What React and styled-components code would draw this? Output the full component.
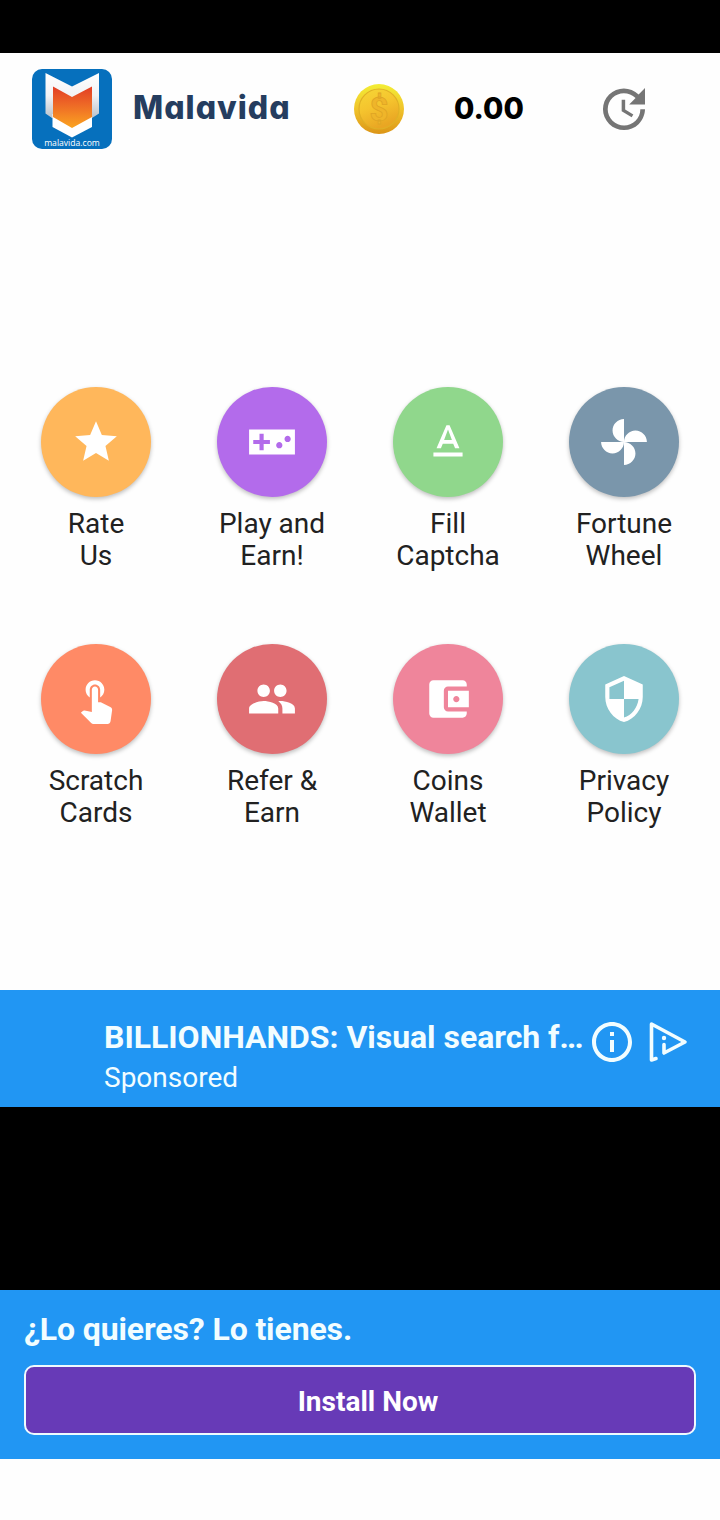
import React from "react";
import styled, { createGlobalStyle } from "styled-components";
import {
  MdAccountBalanceWallet,
  MdStar,
  MdTextFormat,
  MdInfoOutline,
} from "react-icons/md";

const theme = {
  blue: "#2196f3",
  purple: "#673ab7",
  navy: "#253d5f",
  text: "#212121",
  grey: "#757575",
};

const PATHS = {
  game: "M23 6H1v12h22V6zm-12 7H8v3H6v-3H3v-2h3V8h2v3h3v2zm4.5 2c-.83 0-1.5-.67-1.5-1.5s.67-1.5 1.5-1.5 1.5.67 1.5 1.5-.67 1.5-1.5 1.5zm4-3c-.83 0-1.5-.67-1.5-1.5S18.67 9 19.5 9s1.5.67 1.5 1.5-.67 1.5-1.5 1.5z",
  toys: "M12 12c0-3 2.5-5.5 5.5-5.5S23 9 23 12H12zm0 0c0 3-2.5 5.5-5.5 5.5S1 15 1 12h11zm0 0c-3 0-5.5-2.5-5.5-5.5S9 1 12 1v11zm0 0c3 0 5.5 2.5 5.5 5.5S15 23 12 23V12z",
  touch: "M9 11.24V7.5C9 6.12 10.12 5 11.5 5S14 6.12 14 7.5v3.74c1.21-.81 2-2.18 2-3.74C16 5.01 13.99 3 11.5 3S7 5.01 7 7.5c0 1.56.79 2.93 2 3.74zm9.84 4.63l-4.54-2.26c-.17-.07-.35-.11-.54-.11H13v-6c0-.83-.67-1.5-1.5-1.5S10 6.67 10 7.5v10.74l-3.43-.72c-.08-.01-.15-.03-.24-.03-.31 0-.59.13-.79.33l-.79.8 4.94 4.94c.27.27.65.44 1.06.44h6.79c.75 0 1.33-.55 1.44-1.28l.75-5.27c.01-.07.02-.14.02-.2 0-.62-.38-1.16-.91-1.38z",
  group: "M16 11c1.66 0 2.99-1.34 2.99-3S17.66 5 16 5c-1.66 0-3 1.34-3 3s1.34 3 3 3zm-8 0c1.66 0 2.99-1.34 2.99-3S9.66 5 8 5C6.34 5 5 6.34 5 8s1.34 3 3 3zm0 2c-2.33 0-7 1.17-7 3.5V19h14v-2.5c0-2.33-4.67-3.5-7-3.5zm8 0c-.29 0-.62.02-.97.05 1.16.84 1.97 1.97 1.97 3.45V19h6v-2.5c0-2.33-4.67-3.5-7-3.5z",
  security: "M12 1L3 5v6c0 5.55 3.84 10.74 9 12 5.16-1.26 9-6.45 9-12V5l-9-4zm0 10.99h7c-.53 4.12-3.28 7.79-7 8.94V12H5V6.3l7-3.11v8.8z",
  update: "M21 10.12h-6.78l2.74-2.82c-2.73-2.7-7.15-2.8-9.88-.1-2.73 2.71-2.73 7.08 0 9.79 2.73 2.71 7.15 2.71 9.88 0C18.32 15.65 19 14.08 19 12.1h2c0 1.98-.88 4.55-2.64 6.29-3.51 3.48-9.21 3.48-12.72 0-3.5-3.47-3.53-9.11-.02-12.58 3.51-3.47 9.14-3.47 12.65 0L21 3v7.12zM12.5 8v4.25l3.5 2.08-.72 1.21L11 13V8h1.5z",
};

const Icon = ({ name, size = 50 }) => (
  <svg width={size} height={size} viewBox="0 0 24 24" fill="currentColor">
    <path d={PATHS[name]} />
  </svg>
);

const menuItems = [
  { lines: ["Rate", "Us"], color: "#ffb75b", icon: <MdStar size={50} /> },
  { lines: ["Play and", "Earn!"], color: "#b36beb", icon: <Icon name="game" /> },
  { lines: ["Fill", "Captcha"], color: "#90d78c", icon: <MdTextFormat size={50} /> },
  { lines: ["Fortune", "Wheel"], color: "#7a96ab", icon: <Icon name="toys" /> },
  { lines: ["Scratch", "Cards"], color: "#ff8a66", icon: <Icon name="touch" /> },
  { lines: ["Refer &", "Earn"], color: "#e06e73", icon: <Icon name="group" /> },
  { lines: ["Coins", "Wallet"], color: "#ef859b", icon: <MdAccountBalanceWallet size={50} /> },
  { lines: ["Privacy", "Policy"], color: "#89c5ce", icon: <Icon name="security" /> },
];

const Shield = () => (
  <svg width="80" height="69" viewBox="0 0 80 69">
    <defs>
      <linearGradient id="shieldOuter" x1="0" y1="0" x2="0" y2="1">
        <stop offset="0" stopColor="#ffffff" />
        <stop offset="0.5" stopColor="#f2f3f5" />
        <stop offset="1" stopColor="#b9c2cc" />
      </linearGradient>
      <linearGradient id="shieldInner" x1="0" y1="0" x2="0" y2="1">
        <stop offset="0" stopColor="#e23d25" />
        <stop offset="0.45" stopColor="#ee6a26" />
        <stop offset="1" stopColor="#fba521" />
      </linearGradient>
    </defs>
    <path d="M13.500 4 40 17.500 67 4V44.500L60 49H20L13.500 44.500z" fill="url(#shieldOuter)" />
    <path d="M20.500 45H60V58L40 68.500 20.500 58z" fill="#fff" />
    <path d="M21 17.500 40 28 60 17.500V48L40 59 21 48z" fill="url(#shieldInner)" />
  </svg>
);

const Coin = () => (
  <svg width="50" height="50" viewBox="0 0 50 50">
    <defs>
      <linearGradient id="coinRim" x1="0" y1="0" x2="0" y2="1">
        <stop offset="0" stopColor="#f3ee35" />
        <stop offset="0.5" stopColor="#f0c32b" />
        <stop offset="1" stopColor="#dc9517" />
      </linearGradient>
      <linearGradient id="coinFace" x1="0" y1="0" x2="0.4" y2="1">
        <stop offset="0" stopColor="#f6d736" />
        <stop offset="0.5" stopColor="#f5c42e" />
        <stop offset="1" stopColor="#e9a623" />
      </linearGradient>
    </defs>
    <circle cx="25" cy="25" r="25" fill="url(#coinRim)" />
    <circle cx="25" cy="25" r="20" fill="url(#coinFace)" stroke="#e0b026" strokeWidth="1.200" />
    <text
      x="25"
      y="37"
      textAnchor="middle"
      fontFamily="Roboto, sans-serif"
      fontWeight="700"
      fontSize="33"
      fill="#efb52a"
      stroke="#dfa524"
      strokeWidth="0.800"
    >
      $
    </text>
  </svg>
);

const AdChoices = () => (
  <svg width="40" height="42" viewBox="0 0 40 42" fill="none" stroke="currentColor" strokeWidth="3.600" strokeLinecap="round" strokeLinejoin="round">
    <path d="M8 37.500 3.500 39V3L37 21 16 32V23.500" />
    <circle cx="16" cy="17" r="2.200" fill="currentColor" stroke="none" />
  </svg>
);

export default function App() {
  return (
    <>
      <GlobalStyle />
      <Screen>
        <StatusBar />
        <Header>
          <Logo>
            <Shield />
            <LogoCaption>malavida.com</LogoCaption>
          </Logo>
          <Title>Malavida</Title>
          <Coin />
          <Balance>0.00</Balance>
          <RefreshButton>
            <Icon name="update" size={56} />
          </RefreshButton>
        </Header>
        <Menu>
          {menuItems.map((item) => (
            <MenuItem key={item.lines.join(" ")}>
              <Circle $color={item.color}>{item.icon}</Circle>
              <Label>
                {item.lines[0]}
                <br />
                {item.lines[1]}
              </Label>
            </MenuItem>
          ))}
        </Menu>
        <AdHeader>
          <AdTexts>
            <AdTitle>
              BILLIONHANDS: Visual search f<Dots>...</Dots>
            </AdTitle>
            <Sponsored>Sponsored</Sponsored>
          </AdTexts>
          <AdIcons>
            <MdInfoOutline size={48} />
            <AdChoices />
          </AdIcons>
        </AdHeader>
        <AdMedia />
        <AdFooter>
          <AdSlogan>¿Lo quieres? Lo tienes.</AdSlogan>
          <InstallButton>Install Now</InstallButton>
        </AdFooter>
      </Screen>
    </>
  );
}

const GlobalStyle = createGlobalStyle`
  * {
    box-sizing: border-box;
  }

  body {
    margin: 0;
    background: #fff;
    font-family: Roboto, sans-serif;
  }

  svg {
    display: block;
    flex-shrink: 0;
  }
`;

const Screen = styled.div`
  display: flex;
  flex-direction: column;
  width: 720px;
  height: 1520px;
  background: #fefefe;
  overflow: hidden;
`;

const StatusBar = styled.div`
  height: 53px;
  background: #000;
`;

const Header = styled.header`
  display: flex;
  align-items: center;
  height: 112px;
  padding-left: 32px;
`;

const Logo = styled.div`
  display: flex;
  flex-direction: column;
  width: 80px;
  height: 80px;
  border-radius: 10px;
  background: #0670bd;
  overflow: hidden;
`;

const LogoCaption = styled.span`
  color: #fff;
  font-family: "Open Sans", sans-serif;
  font-size: 8.6px;
  line-height: 10px;
  text-align: center;
`;

const Title = styled.h1`
  width: 221px;
  margin: 0 0 3px 21px;
  color: ${theme.navy};
  font-family: Inter, sans-serif;
  font-feature-settings: "cv11";
  font-optical-sizing: none;
  font-size: 32px;
  font-weight: 800;
  letter-spacing: 1px;
`;

const Balance = styled.span`
  width: 142px;
  margin: 0 0 3px 50px;
  color: #000;
  font-family: Inter, sans-serif;
  font-size: 29.5px;
  font-weight: 800;
`;

const RefreshButton = styled.button`
  padding: 0;
  border: 0;
  background: none;
  color: ${theme.grey};
`;

const Menu = styled.main`
  display: grid;
  grid-template-columns: repeat(4, 176px);
  grid-auto-rows: 257px;
  height: 825px;
  padding: 222px 8px 0;
`;

const MenuItem = styled.div`
  display: flex;
  flex-direction: column;
  align-items: center;
  gap: 11px;
`;

const Circle = styled.div`
  display: flex;
  align-items: center;
  justify-content: center;
  width: 110px;
  height: 110px;
  border-radius: 50%;
  background: ${({ $color }) => $color};
  box-shadow: 0 2px 4px rgba(0, 0, 0, 0.25);
  color: #fff;
`;

const Label = styled.span`
  color: ${theme.text};
  font-size: 28px;
  line-height: 32px;
  text-align: center;
`;

const AdHeader = styled.section`
  display: flex;
  height: 117px;
  padding: 28px 32px 0 104px;
  background: ${theme.blue};
  color: #f2fdff;
`;

const AdTexts = styled.div`
  display: flex;
  flex-direction: column;
  width: 484px;
  gap: 4px;
`;

const AdTitle = styled.span`
  font-size: 32px;
  font-weight: 700;
  letter-spacing: -0.03px;
  line-height: 38px;
  white-space: nowrap;
`;

const Dots = styled.span`
  letter-spacing: -1.8px;
`;

const Sponsored = styled.span`
  font-size: 28px;
  line-height: 36px;
`;

const AdIcons = styled.div`
  display: flex;
  align-items: center;
  gap: 12px;
  height: 48px;
`;

const AdMedia = styled.div`
  height: 183px;
  background: #000;
`;

const AdFooter = styled.section`
  height: 169px;
  padding: 20px 24px 0;
  background: ${theme.blue};
`;

const AdSlogan = styled.p`
  margin: 0 0 17px;
  color: #f2fdff;
  font-size: 32px;
  font-weight: 700;
  letter-spacing: -0.12px;
  line-height: 38px;
`;

const InstallButton = styled.button`
  display: block;
  width: 100%;
  height: 70px;
  padding: 2px 0 0 16px;
  border: 2px solid #eefaff;
  border-radius: 10px;
  background: ${theme.purple};
  color: #fff;
  font-family: Roboto, sans-serif;
  font-size: 28px;
  font-weight: 700;
`;
